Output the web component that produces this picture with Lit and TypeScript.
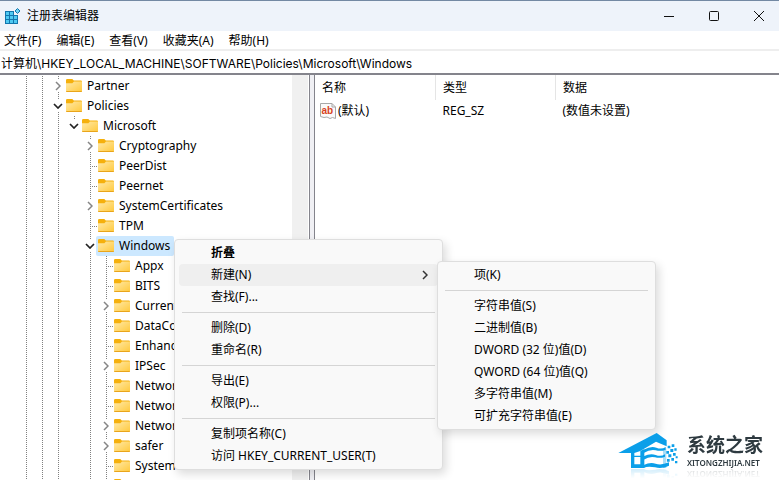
import { LitElement, html, svg, css, nothing } from "lit";
import { customElement, property } from "lit/decorators.js";

const arrowRight = html`<svg width="6" height="10" viewBox="0 0 6 10" fill="none"><path d="M1 1l4 4-4 4" stroke="currentColor" stroke-width="1.5"/></svg>`;
const arrowDown = html`<svg width="10" height="6" viewBox="0 0 10 6" fill="none"><path d="M1 1l4 4 4-4" stroke="currentColor" stroke-width="1.7"/></svg>`;

type Node = { guides: string; name: string; selected?: boolean };

// One character per 16px indent column:
// "|" line, "." empty, "t" branch to a leaf, ">" collapsed, "v" expanded, "V" expanded last child
const nodes: Node[] = [
  { guides: "||>", name: "Partner" },
  { guides: "||v", name: "Policies" },
  { guides: "|||V", name: "Microsoft" },
  { guides: "|||.>", name: "Cryptography" },
  { guides: "|||.t", name: "PeerDist" },
  { guides: "|||.t", name: "Peernet" },
  { guides: "|||.>", name: "SystemCertificates" },
  { guides: "|||.t", name: "TPM" },
  { guides: "|||.v", name: "Windows", selected: true },
  { guides: "|||.|t", name: "Appx" },
  { guides: "|||.|t", name: "BITS" },
  { guides: "|||.|>", name: "CurrentVersion" },
  { guides: "|||.|t", name: "DataCollection" },
  { guides: "|||.|t", name: "EnhancedStorage" },
  { guides: "|||.|>", name: "IPSec" },
  { guides: "|||.|t", name: "Network" },
  { guides: "|||.|t", name: "Network" },
  { guides: "|||.|>", name: "Network" },
  { guides: "|||.|>", name: "safer" },
  { guides: "|||.|t", name: "System" },
  { guides: "|||.|t", name: "" },
];

@customElement("folder-tree")
export class FolderTree extends LitElement {
  static styles = css`
    :host { display: block; overflow: hidden; }
    .list { margin: 0; padding: 1px 0 0 18px; list-style: none; }
    .row { display: flex; height: 20px; }
    .cell { flex: none; width: 16px; display: flex; flex-direction: column; align-items: center; justify-content: center; color: #222; }
    .cell.line, .cell.leaf { background: repeating-linear-gradient(#808080 0 1px, transparent 1px 2px) 8px 0 / 1px 100% no-repeat; }
    .cell.leaf { background: repeating-linear-gradient(#808080 0 1px, transparent 1px 2px) 8px 0 / 1px 100% no-repeat, repeating-linear-gradient(90deg, #808080 0 1px, transparent 1px 2px) 8px 10px / 8px 1px no-repeat; }
    .cell.open { background: repeating-linear-gradient(#808080 0 1px, transparent 1px 2px) 8px 0 / 1px 4px no-repeat, repeating-linear-gradient(#808080 0 1px, transparent 1px 2px) 8px 16px / 1px 4px no-repeat; }
    .cell.last { background: repeating-linear-gradient(#808080 0 1px, transparent 1px 2px) 8px 0 / 1px 4px no-repeat; }
    .cell.shut { color: #858585; }
    .node { display: flex; align-items: center; gap: 5px; margin-left: -2px; padding: 0 4px 0 2px; border-radius: 2px; white-space: nowrap; line-height: 20px; }
    .node.selected { background: #cce8ff; }
    .node svg { margin-bottom: 1px; }
  `;
  cell(c: string) {
    const kind = { "|": "line", t: "leaf", ">": "open shut", v: "open", V: "last" }[c] ?? "";
    return html`<span class="cell ${kind}">${c === ">" ? arrowRight : c === "v" || c === "V" ? arrowDown : nothing}</span>`;
  }
  render() {
    return html`<ul class="list" role="tree">
      ${nodes.map(
        (n) => html`<li class="row" role="treeitem">
          ${[...n.guides].map((c) => this.cell(c))}
          <span class="node ${n.selected ? "selected" : ""}">
            <svg width="16" height="13" viewBox="0 0 16 13">
              <defs><linearGradient id="f" x2="1" y2="1"><stop stop-color="#ffe9a8"/><stop offset="1" stop-color="#ffc93c"/></linearGradient></defs>
              <path d="M0 1.200Q0 0 1.200 0H6.300L7.800 1.500H14.800Q16 1.500 16 2.700V5H0z" fill="#f5b00c"/>
              <path d="M0 4.200H6.400L8 2.600H16V12Q16 13 15 13H1Q0 13 0 12z" fill="url(#f)"/>
              <path d="M0 12H16Q16 13 15 13H1Q0 13 0 12z" fill="#e9a51b"/>
            </svg>
            <span>${n.name}</span>
          </span>
        </li>`
      )}
    </ul>`;
  }
}

type Entry = { text: string; bold?: boolean; sub?: boolean } | null;

@customElement("popup-menu")
export class PopupMenu extends LitElement {
  @property({ attribute: false }) entries: Entry[] = [];
  static styles = css`
    :host { display: block; box-sizing: border-box; padding: 2px 4px; background: #f9f9f9; border: 1px solid #dedede; border-radius: 4px; box-shadow: 3px 4px 10px rgba(0, 0, 0, 0.14); }
    .item { display: flex; align-items: center; justify-content: space-between; width: 100%; height: 22px; padding: 0 10px 0 32px; border: 0; border-radius: 4px; background: none; color: #000; font: inherit; line-height: 20px; text-align: left; white-space: nowrap; }
    .item svg { color: #333; }
    .item.bold { font-weight: 700; }
    .item.active { background: #efefef; }
    .rule { margin: 4px 3px; border: 0; border-top: 1px solid #d5d5d5; }
  `;
  render() {
    return this.entries.map((e) =>
      e === null
        ? html`<hr class="rule" />`
        : html`<button class="item ${e.bold ? "bold" : ""} ${e.sub ? "active" : ""}" role="menuitem"><span>${e.text}</span>${e.sub ? arrowRight : nothing}</button>`
    );
  }
}

const mainMenu: Entry[] = [
  { text: "折叠", bold: true }, { text: "新建(N)", sub: true }, { text: "查找(F)..." }, null,
  { text: "删除(D)" }, { text: "重命名(R)" }, null,
  { text: "导出(E)" }, { text: "权限(P)..." }, null,
  { text: "复制项名称(C)" }, { text: "访问 HKEY_CURRENT_USER(T)" },
];
const newMenu: Entry[] = [
  { text: "项(K)" }, null,
  { text: "字符串值(S)" }, { text: "二进制值(B)" }, { text: "DWORD (32 位)值(D)" },
  { text: "QWORD (64 位)值(Q)" }, { text: "多字符串值(M)" }, { text: "可扩充字符串值(E)" },
];

@customElement("app-root")
export class AppRoot extends LitElement {
  static styles = css`
    :host { display: flex; flex-direction: column; position: relative; box-sizing: border-box; height: 100vh; overflow: hidden; background: #fff; color: #000; font: 12px/20px "Noto Sans", "Noto Sans CJK SC", sans-serif; border-top: 1px solid #7389a3; }
    .title { flex: none; display: flex; align-items: center; height: 30px; padding-left: 5px; margin-right: -2px; background: #eef3fa; }
    .title .name { flex: 1; margin-left: 6px; }
    .title button { display: grid; place-items: center; width: 45px; height: 30px; padding: 0; border: 0; background: none; }
    .menubar { flex: none; display: flex; gap: 15px; height: 18px; padding-left: 4px; border-bottom: 2px solid #eeeeee; }
    .menubar button { padding: 0; border: 0; background: none; color: inherit; font: inherit; line-height: 20px; }
    .address { flex: none; height: 22px; padding: 0 1px; border: 0; outline: 0; background: #fff; color: inherit; font: 12px Inter, "Noto Sans CJK SC", sans-serif; }
    .body { flex: 1; min-height: 0; display: flex; border-top: 2px solid #84848c; }
    .tree { flex: none; width: 292px; }
    .scroll { flex: none; width: 16px; margin-right: 1px; background: #f0f0f0; }
    .split { flex: none; width: 4px; background: #f0f0f4; border: solid #84848c; border-width: 0 1px; }
    .values { flex: 1; }
    table { width: 100%; border-collapse: collapse; table-layout: fixed; }
    th, td { padding: 0 0 0 7px; text-align: left; font-weight: 400; }
    th { height: 25px; border-right: 1px solid #e5e5e5; }
    th:last-child { border-right: 0; }
    .first { width: 113px; }
    .second { width: 112px; }
    td { height: 22px; }
    td.key { padding-left: 5px; }
    .key span { display: flex; align-items: center; gap: 2px; }
    .context { position: absolute; left: 174px; top: 238px; width: 269px; }
    .submenu { position: absolute; left: 437px; top: 260px; width: 219px; }
    .brand { position: absolute; right: 16px; bottom: 10px; display: flex; align-items: center; gap: 7px; color: #2e3a40; -webkit-box-reflect: below -3px linear-gradient(transparent 70%, rgba(0, 0, 0, 0.22)); }
    .brand .words { display: flex; flex-direction: column; }
    .brand b { font: 700 19px/24px "Noto Sans CJK SC", sans-serif; }
    .brand small { font: 600 8px/14px "Noto Sans", sans-serif; }
  `;
  render() {
    return html`
      <header class="title">
        <svg width="16" height="16" viewBox="0 0 16 16">
          <path d="M0 3h9v4h4v9H0z" fill="#1276ad"/>
          ${[[1, 4], [5, 4], [1, 8], [5, 8], [9, 8], [1, 12], [5, 12], [9, 12]].map(([x, y]) => svg`<rect x=${x} y=${y} width="3" height="3" fill="#4fcaf2"/>`)}
          <path d="M12.500 .5l2.500 2.500-2.500 2.500L10 3z" fill="#6fd3f3" stroke="#1276ad"/>
        </svg>
        <span class="name">注册表编辑器</span>
        <button aria-label="最小化"><svg width="12" height="12"><path d="M1 6.500h10" stroke="#111"/></svg></button>
        <button aria-label="最大化"><svg width="12" height="12"><rect x="1.500" y="1.500" width="9" height="9" rx="1" fill="none" stroke="#111"/></svg></button>
        <button aria-label="关闭"><svg width="12" height="12"><path d="M1 1l10 10M11 1L1 11" stroke="#111"/></svg></button>
      </header>
      <nav class="menubar">
        ${["文件(F)", "编辑(E)", "查看(V)", "收藏夹(A)", "帮助(H)"].map((t) => html`<button>${t}</button>`)}
      </nav>
      <input class="address" aria-label="地址" .value=${"计算机\\HKEY_LOCAL_MACHINE\\SOFTWARE\\Policies\\Microsoft\\Windows"} />
      <main class="body">
        <folder-tree class="tree"></folder-tree>
        <div class="scroll"></div>
        <div class="split"></div>
        <section class="values">
          <table>
            <thead><tr><th class="first">名称</th><th class="second">类型</th><th>数据</th></tr></thead>
            <tbody><tr>
              <td class="key"><span>
                <svg width="16" height="16" viewBox="0 0 16 16">
                  <path d="M.5 .5H12L15.500 4V15.500L12.500 14.500 10 15.500 7 14 4 14.500 .5 13.500z" fill="#fafafa" stroke="#a8a8a8"/>
                  <path d="M12 .5V4H15.500" fill="none" stroke="#a8a8a8"/>
                  <text x="1.500" y="10.500" font-family="Liberation Sans" font-weight="700" font-size="10" fill="#d8431f">ab</text>
                </svg>(默认)</span></td>
              <td>REG_SZ</td><td>(数值未设置)</td>
            </tr></tbody>
          </table>
        </section>
      </main>
      <popup-menu class="context" role="menu" .entries=${mainMenu}></popup-menu>
      <popup-menu class="submenu" role="menu" .entries=${newMenu}></popup-menu>
      <div class="brand">
        <svg width="62" height="36" viewBox="51 38 186 108">
          <g fill="#0b9fe9">
            <path d="M52 98L167 38 197 60V78L165 64 118 92 100 98V106H120V110H100V132H120V143H90V98z"/>
            <path d="M118 92L130 86V143H118z"/>
            <path d="M128 88Q150 76 166 82T194 80V88Q180 94 164 90T128 98zM128 108Q148 98 164 104T192 102V109Q178 115 162 111T128 118zM128 134Q148 124 164 130T204 126V136Q184 146 162 141T128 143z"/>
            <path d="M186 88L196 84V143H186z" opacity="0.350"/>
            <path d="M200 76h8v8h-8zM212 72h8v8h-8zM208 86h9v9h-9zM196 92h8v8h-8zM220 84h7v7h-7zM202 102h9v9h-9zM216 98h8v8h-8zM211 113h8v8h-8zM198 116h8v8h-8zM224 108h6v6h-6zM222 122h7v7h-7z"/>
          </g>
        </svg>
        <span class="words"><b>系统之家</b><small>XITONGZHIJIA.NET</small></span>
      </div>
    `;
  }
}
